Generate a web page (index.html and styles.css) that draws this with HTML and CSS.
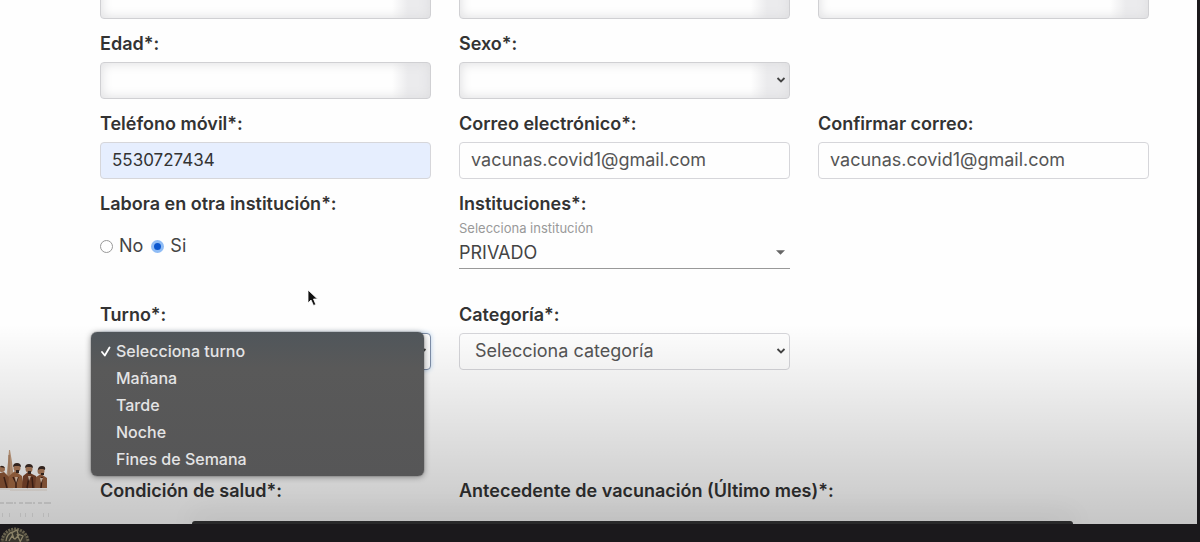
FILE: index.html
```html
<!DOCTYPE html>
<html lang="es">
<head>
<meta charset="utf-8">
<title>Registro de vacunación</title>
<link rel="stylesheet" href="styles.css">
</head>
<body>
<div class="page">
  <main class="sheet">
    <form class="form">
      <div class="row">
        <input class="control masked" type="text" aria-label="Nombre" disabled>
        <input class="control masked" type="text" aria-label="Primer apellido" disabled>
        <input class="control masked" type="text" aria-label="Segundo apellido" disabled>
      </div>
      <div class="row">
        <div class="field">
          <label class="label" for="edad">Edad*:</label>
          <input class="control masked" id="edad" type="text" disabled>
        </div>
        <div class="field">
          <label class="label" for="sexo">Sexo*:</label>
          <div class="select-wrap">
            <select class="control masked" id="sexo" disabled><option></option></select>
            <svg class="chevron" viewBox="0 0 10 8" aria-hidden="true"><path d="M1.500 2l3.500 3.500L8.500 2" fill="none" stroke="#444" stroke-width="1.800"/></svg>
          </div>
        </div>
      </div>
      <div class="row">
        <div class="field">
          <label class="label" for="tel">Teléfono móvil*:</label>
          <input class="control autofilled" id="tel" type="tel" value="5530727434">
        </div>
        <div class="field">
          <label class="label" for="correo">Correo electrónico*:</label>
          <input class="control" id="correo" type="email" value="vacunas.covid1@gmail.com">
        </div>
        <div class="field">
          <label class="label" for="correo2">Confirmar correo:</label>
          <input class="control" id="correo2" type="email" value="vacunas.covid1@gmail.com">
        </div>
      </div>
      <div class="row row-work">
        <fieldset class="field radios">
          <legend class="label">Labora en otra institución*:</legend>
          <div class="radio-line">
            <label class="radio"><input type="radio" name="labora">No</label>
            <label class="radio"><input type="radio" name="labora" checked>Si</label>
          </div>
        </fieldset>
        <div class="field institution">
          <span class="label">Instituciones*:</span>
          <label class="hint" for="inst">Selecciona institución</label>
          <div class="select-wrap">
            <select class="line-select" id="inst"><option>PRIVADO</option></select>
            <svg class="caret" viewBox="0 0 10 5" aria-hidden="true"><path d="M0 0h10L5 5z" fill="#666"/></svg>
          </div>
        </div>
      </div>
      <div class="row row-shift">
        <div class="field">
          <label class="label" for="turno">Turno*:</label>
          <div class="select-wrap">
            <select class="control focused" id="turno"><option></option></select>
            <svg class="chevron" viewBox="0 0 10 8" aria-hidden="true"><path d="M1.500 2l3.500 3.500L8.500 2" fill="none" stroke="#444" stroke-width="1.800"/></svg>
            <ul class="menu" role="listbox" aria-label="Turno">
              <li class="option" role="option" aria-selected="true"><svg class="tick" viewBox="0 0 10 11" aria-hidden="true"><path d="M1 6l2.800 3.500L8.500 1.500" fill="none" stroke="#fff" stroke-width="1.800" stroke-linecap="round" stroke-linejoin="round"/></svg>Selecciona turno</li>
              <li class="option" role="option">Mañana</li>
              <li class="option" role="option">Tarde</li>
              <li class="option" role="option">Noche</li>
              <li class="option" role="option">Fines de Semana</li>
            </ul>
          </div>
        </div>
        <div class="field">
          <label class="label" for="categoria">Categoría*:</label>
          <div class="select-wrap">
            <select class="control roomy" id="categoria"><option>Selecciona categoría</option></select>
            <svg class="chevron" viewBox="0 0 10 8" aria-hidden="true"><path d="M1.500 2l3.500 3.500L8.500 2" fill="none" stroke="#444" stroke-width="1.800"/></svg>
          </div>
        </div>
      </div>
      <div class="row">
        <span class="label">Condición de salud*:</span>
        <span class="label wide">Antecedente de vacunación (Último mes)*:</span>
      </div>
    </form>
    <svg class="heroes" viewBox="0 0 54 72" aria-hidden="true">
      <path d="M6 30L8 12l1-12h1l2 12 2 18z" fill="#c9a283"/>
      <path d="M9 5v24" stroke="#a67657" stroke-width="1"/>
      <g fill="#8e5635">
        <path d="M0 38V23l4-1 5 5v11z"/>
        <path d="M8 38l1-12 6-5 7 5 2 12z" fill="#a46a43"/>
        <path d="M22 38l1-12 5-4 8 4 1 12z" fill="#7c452b"/>
        <path d="M35 38l1-11 5-3 6 4v10z" fill="#976040"/>
      </g>
      <g fill="#b27f5d"><circle cx="2" cy="19" r="3"/><circle cx="17" cy="18" r="3.500"/><circle cx="29" cy="19" r="3.500"/><circle cx="41" cy="21" r="3.500"/></g>
      <path d="M13 17q0-4 4-4t4 4l-2-1h-4zM25 18q0-4 4-4t4 4l-2-1h-4zM38 20q0-4 4-4t3 4l-2-1h-3zM0 17q2-3 5 1zM16 20h3v3h-3zM28 21h3v3h-3zM41 23h3v2h-3z" fill="#3b2a23"/>
      <path d="M4 27l3 11M13 27l3 6v5M18 27l-2 6M29 27l-2 11M32 27l1 11M42 27l-1 11" stroke="#452317" stroke-width="1.500" fill="none"/>
      <path d="M15 27l1 6 2-6zM28 26l1 5 2-5zM40 28l1 5 2-5z" fill="#e3c9b3"/>
      <path d="M0 39h13M10 40h37" stroke="#f5efea" stroke-width="2"/>
      <path d="M0 53h52" stroke="#999" stroke-width="1" stroke-dasharray="4 2 7 1 2 3" opacity=".5"/>
      <path d="M2 65h48" stroke="#aaa" stroke-width="4" stroke-dasharray="1 6 1 10 1 4" opacity=".25"/>
    </svg>
    <svg class="pointer" viewBox="0 0 12 18" aria-hidden="true"><path d="M1 1v13l3-3 2.500 5.500 2.300-1L6.500 10H10.500z" fill="#111" stroke="#fff" stroke-width=".8"/></svg>
    <div class="shade"></div>
    <div class="dock"></div>
  </main>
  <footer class="strip">
    <svg class="seal" viewBox="0 0 32 16" aria-hidden="true">
      <circle cx="15" cy="16" r="13" fill="#37352d" stroke="#69634f" stroke-width="3" stroke-dasharray="2 1"/>
      <path d="M6 15q1-8 7-9l4-2 1 4 5 2-3 6M9 15l3-5 3 3 4-4M12 7l2 6M17 8l3 7" stroke="#8b8368" stroke-width="1.300" fill="none"/>
    </svg>
  </footer>
</div>
</body>
</html>
```
FILE: styles.css
```css
* { box-sizing: border-box; }

body {
  margin: 0;
  background: #1b191c;
  color: #333;
  font-family: Inter, "Liberation Sans", sans-serif;
  font-size: 18px;
}

.page {
  display: flex;
  flex-direction: column;
  height: 100vh;
  overflow: hidden;
}

.sheet {
  position: relative;
  flex: 1;
  min-height: 0;
  margin-right: 3px;
  padding: 0 48px 0 100px;
  background: #fefefe;
  overflow: hidden;
}

.form { margin-top: -18px; }

.row {
  display: grid;
  grid-template-columns: repeat(3, minmax(0, 1fr));
  column-gap: 28px;
  margin-bottom: 13px;
}

.field {
  display: flex;
  flex-direction: column;
  min-width: 0;
  margin: 0;
  padding: 0;
  border: 0;
}

.label {
  padding: 0;
  margin-bottom: 6px;
  line-height: 24px;
  font-weight: 600;
  white-space: nowrap;
}

.wide { grid-column: span 2; }

.control {
  display: block;
  width: 100%;
  height: 37px;
  padding: 0 11px 2px;
  border: 1px solid #d6d6da;
  border-radius: 4px;
  background: #fefefe;
  color: #555;
  font: inherit;
  appearance: none;
}

.masked {
  border-color: #d0d0d3;
  background: linear-gradient(to right, #fefefe calc(100% - 38px), #ebebed calc(100% - 22px));
  box-shadow: inset 0 0 12px #dcdcde;
  opacity: 1;
}

.autofilled {
  background: #e6eefe;
  color: #333;
  font-size: 17px;
}

.focused {
  border-color: #8090aa;
  box-shadow: 0 0 5px #b9d3ef;
}

.roomy { padding-left: 15px; }

.select-wrap { position: relative; }

.chevron {
  position: absolute;
  top: 14px;
  right: 4px;
  width: 10px;
  height: 8px;
  pointer-events: none;
}

.row-work { margin-bottom: 34px; }

.radio-line {
  display: flex;
  gap: 8px;
  margin-top: 12px;
}

.radio {
  display: flex;
  align-items: center;
  gap: 6px;
  line-height: 24px;
  color: #444;
}

.radio input {
  appearance: none;
  width: 13px;
  height: 13px;
  margin: 0;
  border: 1px solid #999;
  border-radius: 50%;
  background: #fff;
}

.radio input:checked {
  border: 3px solid #8fbcf5;
  background: #0b57cf;
}

.institution .label { margin-bottom: 0; }

.hint {
  line-height: 24px;
  font-size: 13px;
  color: #999;
}

.line-select {
  display: block;
  width: 100%;
  height: 29px;
  padding: 0 0 4px;
  border: 0;
  border-bottom: 1px solid #999;
  background: transparent;
  color: #444;
  font: inherit;
  appearance: none;
}

.caret {
  position: absolute;
  top: 10px;
  right: 5px;
  width: 9px;
  height: 5px;
}

.row-shift { margin-bottom: 109px; }

.menu {
  position: absolute;
  z-index: 3;
  top: -1px;
  left: -9px;
  right: 7px;
  margin: 0;
  padding: 6px 0 3px;
  border-radius: 6px;
  background: linear-gradient(#50565b, #595959 25%, #565657);
  box-shadow: 0 1px 6px #0006, 0 0 1px #222;
  color: #e4e4e5;
  font-size: 16px;
  font-weight: 500;
  list-style: none;
}

.option {
  position: relative;
  padding-left: 25px;
  line-height: 27px;
}

.tick {
  position: absolute;
  top: 8px;
  left: 10px;
  width: 10px;
  height: 11px;
}

.heroes {
  position: absolute;
  left: 0;
  bottom: 2px;
  width: 54px;
  height: 72px;
}

.pointer {
  position: absolute;
  top: 289px;
  left: 307px;
  width: 12px;
  height: 18px;
}

.shade {
  position: absolute;
  left: 0;
  right: 0;
  bottom: 0;
  height: 200px;
  background: linear-gradient(#0000, #00000038);
  pointer-events: none;
}

.dock {
  position: absolute;
  left: 16%;
  right: 124px;
  bottom: 0;
  height: 3px;
  border-radius: 6px 6px 0 0;
  background: #29292a;
  box-shadow: 0 0 28px #0005;
}

.strip {
  height: 18px;
  overflow: hidden;
}

.seal {
  display: block;
  width: 32px;
  height: 16px;
  margin-top: 2px;
}
```
